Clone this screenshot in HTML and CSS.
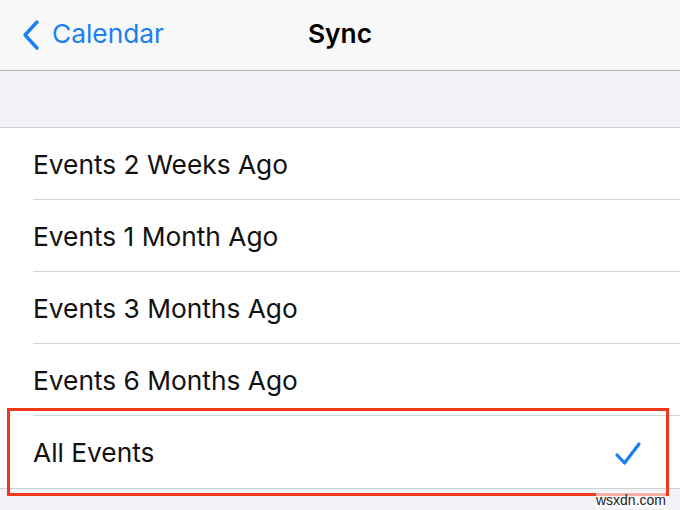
FILE: index.html
```html
<!DOCTYPE html>
<html>
<head>
<meta charset="utf-8">
<link rel="stylesheet" href="styles.css">
</head>
<body>
<div class="screen">
  <header class="nav">
    <div class="back">
      <svg class="chev" width="20" height="32" viewBox="0 0 20 32"><path d="M16 3 L4 16 L16 29" fill="none" stroke="#1a7ef5" stroke-width="3.4" stroke-linecap="round" stroke-linejoin="round"/></svg>
      <span>Calendar</span>
    </div>
    <div class="title">Sync</div>
  </header>
  <div class="gap"></div>
  <ul class="list">
    <li class="row"><span>Events 2 Weeks Ago</span></li>
    <li class="row"><span>Events 1 Month Ago</span></li>
    <li class="row"><span>Events 3 Months Ago</span></li>
    <li class="row"><span>Events 6 Months Ago</span></li>
    <li class="row last"><span>All Events</span>
      <svg class="check" width="28" height="26" viewBox="0 0 28 26"><path d="M3 14 L10.5 22 L25 3" fill="none" stroke="#1a7ef5" stroke-width="3.2" stroke-linecap="round" stroke-linejoin="round"/></svg>
    </li>
  </ul>
  <div class="highlight"></div>
  <div class="foot"></div>
  <div class="wm">wsxdn.com</div>
</div>
</body>
</html>
```
FILE: styles.css
```css
* { box-sizing: border-box; }
html, body { margin: 0; padding: 0; }
body { width: 680px; height: 510px; overflow: hidden; background: #f2f2f7; font-family: Inter, "Liberation Sans", sans-serif; }
.screen { position: relative; width: 680px; height: 510px; display: flex; flex-direction: column; }
.nav { height: 71px; padding-bottom: 3px; background: #f8f8f8; border-bottom: 1px solid #b5b5b8; display: flex; align-items: center; position: relative; }
.back { display: flex; align-items: center; color: #1a7ef5; font-size: 26.3px; padding-left: 21px; gap: 11px; }
.chev { display: block; margin-top: 2px; }
.title { position: absolute; left: 0; right: 0; top: 0; bottom: 4px; display: flex; align-items: center; justify-content: center; font-weight: 600; font-size: 26.3px; color: #000; pointer-events: none; }
.gap { height: 57px; background: #f2f2f7; border-bottom: 1px solid #cfcfd3; }
.list { list-style: none; margin: 0; padding: 0 0 0 33px; background: #fff; border-bottom: 1px solid #cfcfd3; }
.row { height: 72px; display: flex; align-items: center; justify-content: space-between; border-bottom: 1px solid #d6d6d9; font-size: 26.3px; color: #111; padding-right: 38px; padding-top: 1px; }
.row.last { border-bottom: none; }
.check { display: block; margin-top: 2px; }
.highlight { position: absolute; left: 7px; top: 408px; width: 662px; height: 88px; border: 3px solid #f0381a; }
.foot { flex: 1; background: #f2f2f7; }
.wm { position: absolute; right: 14px; bottom: 2px; font-size: 14px; color: #222; font-family: "Liberation Sans", sans-serif; background: rgba(255,255,255,0.6); }
```
